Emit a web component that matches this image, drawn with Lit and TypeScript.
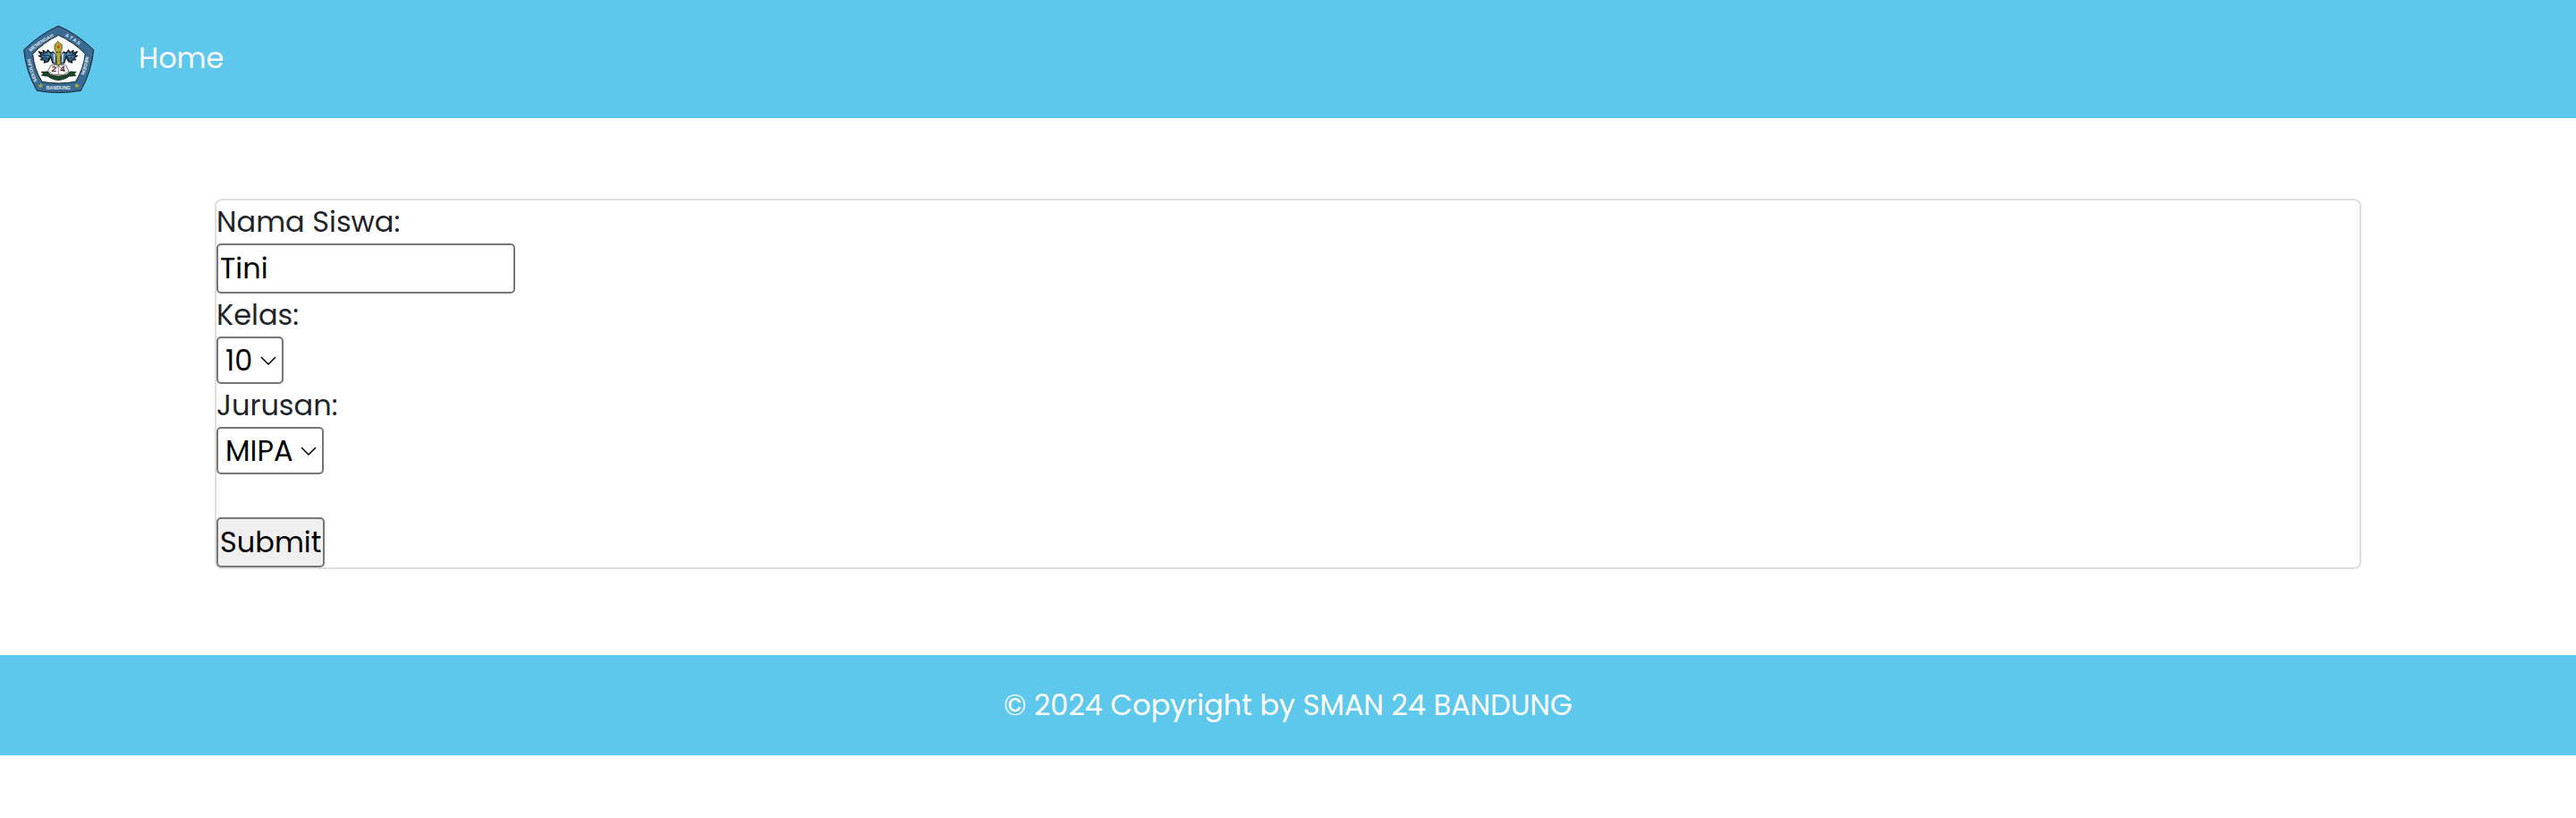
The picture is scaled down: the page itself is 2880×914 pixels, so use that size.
import { LitElement, html, css } from "lit";
import { customElement, state } from "lit/decorators.js";

const KELAS = ["10", "11", "12"];
const JURUSAN = ["MIPA", "IPS"];

@customElement("school-logo")
export class SchoolLogo extends LitElement {
  static styles = css`
    :host {
      display: block;
    }
    .crest {
      display: block;
      width: 84px;
      height: 84px;
      overflow: visible;
    }
    .motto {
      font-family: "Liberation Sans", Arial, sans-serif;
      font-weight: bold;
      font-size: 16px;
      fill: #e4ecf2;
    }
    .number {
      font-family: "Liberation Sans", Arial, sans-serif;
      font-weight: bold;
      font-size: 29px;
      fill: #6b1a20;
    }
  `;

  render() {
    return html`
      <svg class="crest" viewBox="72 72 252 252" role="img" aria-label="SMAN 24 Bandung">
        <defs>
          <path id="edge-nw" d="M103 174Q142 138 210 108" />
          <path id="edge-ne" d="M218 122Q252 137 302 184" />
          <path id="edge-w" d="M125 271Q103 230 98 160" />
          <path id="edge-e" d="M286 190Q282 232 250 296" />
        </defs>
        <path
          d="M196 87Q258 113 314 167Q307 240 271 304Q196 317 124 304Q87 240 80 167Q136 113 196 87Z"
          fill="#386a92" stroke="#12232f" stroke-width="3" stroke-linejoin="round" />
        <path
          d="M196 118Q247 141 286 181Q280 231 253 274Q196 284 141 274Q114 231 110 181Q147 141 196 118Z"
          fill="#fdfdfd" stroke="#12232f" stroke-width="3" stroke-linejoin="round" />
        <text class="motto"><textPath href="#edge-nw">MENENGAH</textPath></text>
        <text class="motto"><textPath href="#edge-ne">A T A S</textPath></text>
        <text class="motto"><textPath href="#edge-w">SEKOLAH</textPath></text>
        <text class="motto"><textPath href="#edge-e">NEGERI</textPath></text>
        <text class="motto" x="196" y="299" text-anchor="middle">BANDUNG</text>
        <g fill="#a8ad3a">
          <path d="M136 278l2.500 6h7l-5.500 4 2 7-6-4-6 4 2-7-5.500-4h7z" />
          <path d="M258 278l2.500 6h7l-5.500 4 2 7-6-4-6 4 2-7-5.500-4h7z" />
        </g>
        <g stroke="#101c28" stroke-width="4" stroke-linejoin="round" fill="#3f6f96">
          <path d="M187 213Q189 183 178 174L170 178L160 168L156 177L144 169L147 179L130 173L140 186L130 187L144 195L136 200L151 202L148 210L162 206L170 190L177 212Z" />
          <path d="M205 213Q203 183 214 174L222 178L230 168L235 177L246 169L244 179L259 173L250 186L259 187L247 195L254 200L240 202L242 210L230 206L222 190L215 212Z" />
        </g>
        <path d="M142 183l16 6 12-7M148 195l16-1 6-8M156 203l10-6M247 183l-16 6-10-7M242 195l-15-1-5-8M235 203l-10-6" fill="none" stroke="#15283a" stroke-width="3" />
        <path d="M160 179l8 4M232 179l-8 4M155 191l8-1M237 191l-8-1" fill="none" stroke="#7fb2d2" stroke-width="3" />
        <path d="M178 177l7 5 1 30-5-4zM214 177l-7 5-1 30 5-4z" fill="#b9d8e9" />
        <path d="M196 216L171 219L160 239L178 250H215L231 239L221 219Z" fill="#fff" stroke="#222" stroke-width="2" />
        <path d="M196 214V250M172 240l24-20 24 20" fill="none" stroke="#444" stroke-width="2" />
        <text class="number" x="173" y="241">2</text>
        <text class="number" x="202" y="241">4</text>
        <path d="M188 174H204L201 219H191Z" fill="#b3a832" stroke="#38350e" stroke-width="2" />
        <path d="M183 164V150L189 145L194 138L201 145L208 150V164L204 175H188Z" fill="#b3a832" stroke="#38350e" stroke-width="2" />
        <path d="M196 149Q203 156 200 162H192Q190 156 196 149Z" fill="#c9481f" />
        <path d="M138 241L159 240L169 250Q196 260 224 250L235 240L256 241L249 247L255 254L232 256Q196 282 160 256L139 253L145 247Z" fill="#194324" stroke="#0c1d10" stroke-width="2" />
        <path d="M174 261Q196 268 218 261" fill="none" stroke="#35523a" stroke-width="3" stroke-dasharray="4 3" />
      </svg>
    `;
  }
}

@customElement("app-root")
export class AppRoot extends LitElement {
  static styles = css`
    :host {
      display: block;
      min-height: 100vh;
      background: #fff;
      color: #212529;
      font-family: Poppins, Inter, sans-serif;
      font-size: 32px;
      line-height: 48px;
    }
    .navbar {
      display: flex;
      align-items: center;
      gap: 47px;
      padding: 24px;
      background: #5dc7ec;
    }
    .nav-link {
      padding-bottom: 2px;
      color: #f8f9fa;
      text-decoration: none;
    }
    .content {
      padding: 90px 240px 96px;
    }
    .card {
      display: flex;
      flex-direction: column;
      align-items: flex-start;
      border: 2px solid #dfdfdf;
      border-radius: 8px;
    }
    .control {
      box-sizing: border-box;
      margin: 0;
      border: 2px solid #767676;
      border-radius: 5px;
      background: #fff;
      color: #000;
      font: inherit;
    }
    .text {
      width: 334px;
      height: 56px;
      padding: 2px;
    }
    .picker {
      display: inline-grid;
      align-items: center;
    }
    .select {
      grid-area: 1 / 1;
      height: 53px;
      padding: 0 32px 0 8px;
      appearance: none;
    }
    .chevron {
      grid-area: 1 / 1;
      justify-self: end;
      width: 18px;
      height: 10px;
      margin-right: 8px;
      pointer-events: none;
    }
    .submit {
      height: 56px;
      margin-top: 48px;
      padding: 2px;
      background: #efefef;
    }
    .footer {
      padding: 32px;
      background: #5dc7ec;
      color: #fff;
      text-align: center;
    }
  `;

  @state() private nama = "Tini";

  private picker(id: string, options: string[]) {
    return html`
      <span class="picker">
        <select class="control select" id=${id} name=${id}>
          ${options.map((o) => html`<option>${o}</option>`)}
        </select>
        <svg class="chevron" viewBox="0 0 18 10" aria-hidden="true">
          <path d="M1 1l8 8 8-8" fill="none" stroke="#000" stroke-width="1.500" />
        </svg>
      </span>
    `;
  }

  render() {
    return html`
      <nav class="navbar">
        <school-logo></school-logo>
        <a class="nav-link" href="#">Home</a>
      </nav>
      <main class="content">
        <form class="card" @submit=${(e: Event) => e.preventDefault()}>
          <label for="nama">Nama Siswa:</label>
          <input
            class="control text"
            id="nama"
            name="nama"
            type="text"
            .value=${this.nama}
            @input=${(e: Event) => (this.nama = (e.target as HTMLInputElement).value)}
          />
          <label for="kelas">Kelas:</label>
          ${this.picker("kelas", KELAS)}
          <label for="jurusan">Jurusan:</label>
          ${this.picker("jurusan", JURUSAN)}
          <button class="control submit" type="submit">Submit</button>
        </form>
      </main>
      <footer class="footer">© 2024 Copyright by SMAN 24 BANDUNG</footer>
    `;
  }
}
